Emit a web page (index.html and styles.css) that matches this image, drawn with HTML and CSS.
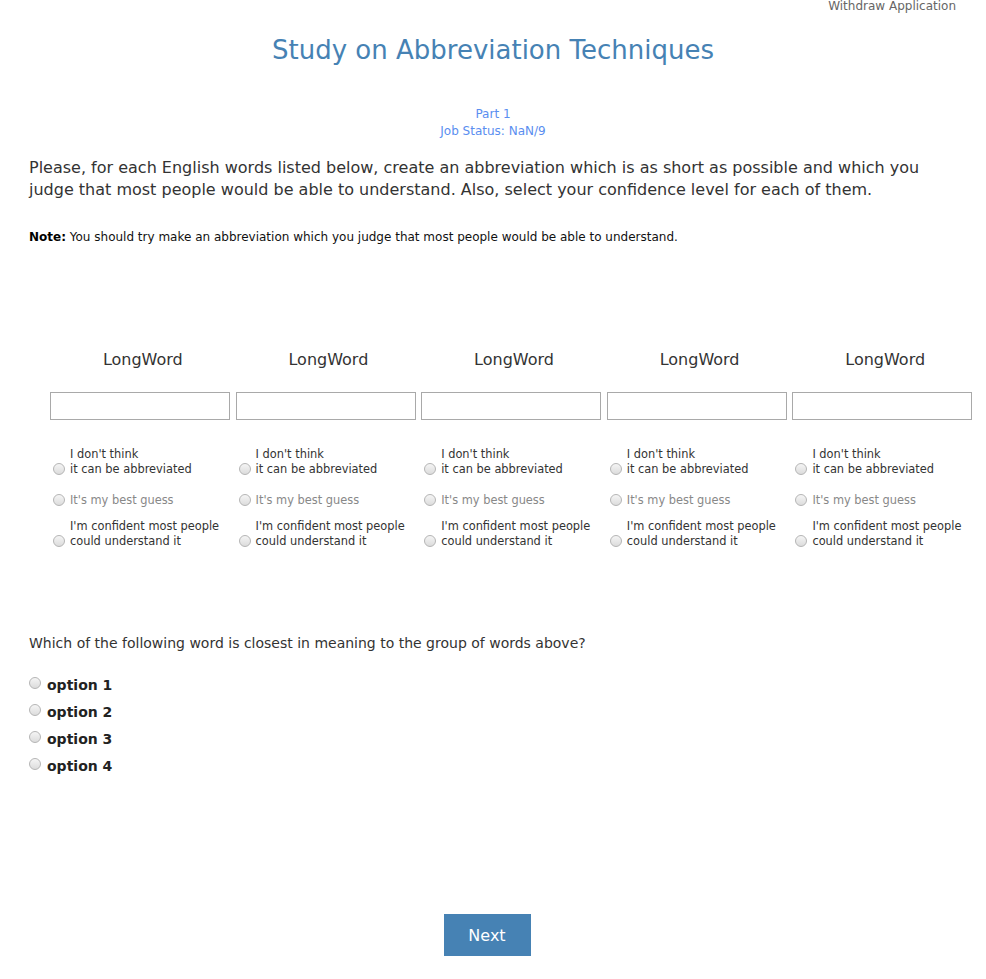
FILE: index.html
```html
<!DOCTYPE html>
<html>
<head>
<meta charset="utf-8">
<link rel="stylesheet" href="styles.css">
</head>
<body>
<div class="topbar"><a class="withdraw">Withdraw Application</a></div>
<h1 class="title">Study on Abbreviation Techniques</h1>
<div class="status">
  <div>Part 1</div>
  <div>Job Status: NaN/9</div>
</div>
<div class="content">
  <p class="intro">Please, for each English words listed below, create an abbreviation which is as short as possible and which you judge that most people would be able to understand. Also, select your confidence level for each of them.</p>
  <p class="note"><b>Note:</b> You should try make an abbreviation which you judge that most people would be able to understand.</p>

  <div class="words">
    <div class="word">
      <div class="word-label">LongWord</div>
      <input class="word-input" type="text">
      <div class="choices">
        <label class="choice"><span class="radio"></span><span class="ctext">I don't think<br>it can be abbreviated</span></label>
        <label class="choice muted"><span class="radio"></span><span class="ctext">It's my best guess</span></label>
        <label class="choice"><span class="radio"></span><span class="ctext">I'm confident most people<br>could understand it</span></label>
      </div>
    </div>
    <div class="word">
      <div class="word-label">LongWord</div>
      <input class="word-input" type="text">
      <div class="choices">
        <label class="choice"><span class="radio"></span><span class="ctext">I don't think<br>it can be abbreviated</span></label>
        <label class="choice muted"><span class="radio"></span><span class="ctext">It's my best guess</span></label>
        <label class="choice"><span class="radio"></span><span class="ctext">I'm confident most people<br>could understand it</span></label>
      </div>
    </div>
    <div class="word">
      <div class="word-label">LongWord</div>
      <input class="word-input" type="text">
      <div class="choices">
        <label class="choice"><span class="radio"></span><span class="ctext">I don't think<br>it can be abbreviated</span></label>
        <label class="choice muted"><span class="radio"></span><span class="ctext">It's my best guess</span></label>
        <label class="choice"><span class="radio"></span><span class="ctext">I'm confident most people<br>could understand it</span></label>
      </div>
    </div>
    <div class="word">
      <div class="word-label">LongWord</div>
      <input class="word-input" type="text">
      <div class="choices">
        <label class="choice"><span class="radio"></span><span class="ctext">I don't think<br>it can be abbreviated</span></label>
        <label class="choice muted"><span class="radio"></span><span class="ctext">It's my best guess</span></label>
        <label class="choice"><span class="radio"></span><span class="ctext">I'm confident most people<br>could understand it</span></label>
      </div>
    </div>
    <div class="word">
      <div class="word-label">LongWord</div>
      <input class="word-input" type="text">
      <div class="choices">
        <label class="choice"><span class="radio"></span><span class="ctext">I don't think<br>it can be abbreviated</span></label>
        <label class="choice muted"><span class="radio"></span><span class="ctext">It's my best guess</span></label>
        <label class="choice"><span class="radio"></span><span class="ctext">I'm confident most people<br>could understand it</span></label>
      </div>
    </div>
  </div>

  <p class="question">Which of the following word is closest in meaning to the group of words above?</p>
  <div class="options">
    <label class="option"><span class="radio"></span><b>option 1</b></label>
    <label class="option"><span class="radio"></span><b>option 2</b></label>
    <label class="option"><span class="radio"></span><b>option 3</b></label>
    <label class="option"><span class="radio"></span><b>option 4</b></label>
  </div>
</div>
<div class="actions"><button class="next">Next</button></div>
</body>
</html>
```

FILE: styles.css
```css
html, body {
  margin: 0;
  padding: 0;
  background: #fff;
}
body {
  font-family: "DejaVu Sans", Verdana, sans-serif;
  color: #333;
  width: 986px;
}
.topbar {
  display: flex;
  justify-content: flex-end;
  padding-right: 30px;
  height: 12px;
}
.withdraw {
  font-size: 12px;
  line-height: 13px;
  color: #666;
}
.title {
  margin: 23px 0 0;
  text-align: center;
  font-size: 26px;
  font-weight: normal;
  line-height: 30px;
  color: #4682b4;
}
.status {
  margin-top: 41px;
  text-align: center;
  font-size: 12px;
  line-height: 17px;
  color: #5a8ef0;
}
.content {
  padding: 0 29px;
}
.intro {
  margin: 17px 0 0;
  font-size: 16px;
  line-height: 22px;
  color: #333;
}
.note {
  margin: 28px 0 0;
  font-size: 12px;
  line-height: 16px;
  color: #111;
}
.note b {
  color: #000;
}
.words {
  margin-top: 105px;
  margin-left: 21px;
  display: grid;
  grid-template-columns: repeat(5, 185.6px);
}
.word {
  display: flex;
  flex-direction: column;
}
.word-label {
  text-align: center;
  font-size: 16px;
  line-height: 20px;
  color: #333;
}
.word-input {
  margin: 22px 0 0;
  box-sizing: border-box;
  width: 180px;
  height: 28px;
  border: 1px solid #a9a9a9;
  padding: 2px 4px;
  background: #fff;
}
.choices {
  margin-top: 27px;
  display: flex;
  flex-direction: column;
  padding-left: 3px;
}
.choice {
  display: flex;
  align-items: flex-end;
  font-size: 11.4px;
  line-height: 15px;
  color: #333;
}
.choice.muted {
  color: #888;
  margin: 16px 0 11px;
}
.radio {
  flex: none;
  box-sizing: border-box;
  width: 12px;
  height: 12px;
  border-radius: 50%;
  border: 1px solid #b5b5b5;
  background: linear-gradient(#f5f5f5, #dcdcdc);
  margin: 0 5px 2px 0;
}
.question {
  margin: 85px 0 0;
  font-size: 14px;
  line-height: 18px;
  color: #333;
}
.options {
  margin-top: 23px;
  display: flex;
  flex-direction: column;
  gap: 7px;
}
.option {
  display: flex;
  align-items: center;
  font-size: 14px;
  line-height: 20px;
  color: #222;
}
.option .radio {
  margin: 0 6px 4px 0;
}
.actions {
  margin-top: 138px;
  display: flex;
  justify-content: center;
}
.next {
  width: 87px;
  height: 42px;
  margin-left: -12px;
  border: none;
  background: #4682b4;
  color: #fff;
  font-family: "DejaVu Sans", Verdana, sans-serif;
  font-size: 16px;
}
```
